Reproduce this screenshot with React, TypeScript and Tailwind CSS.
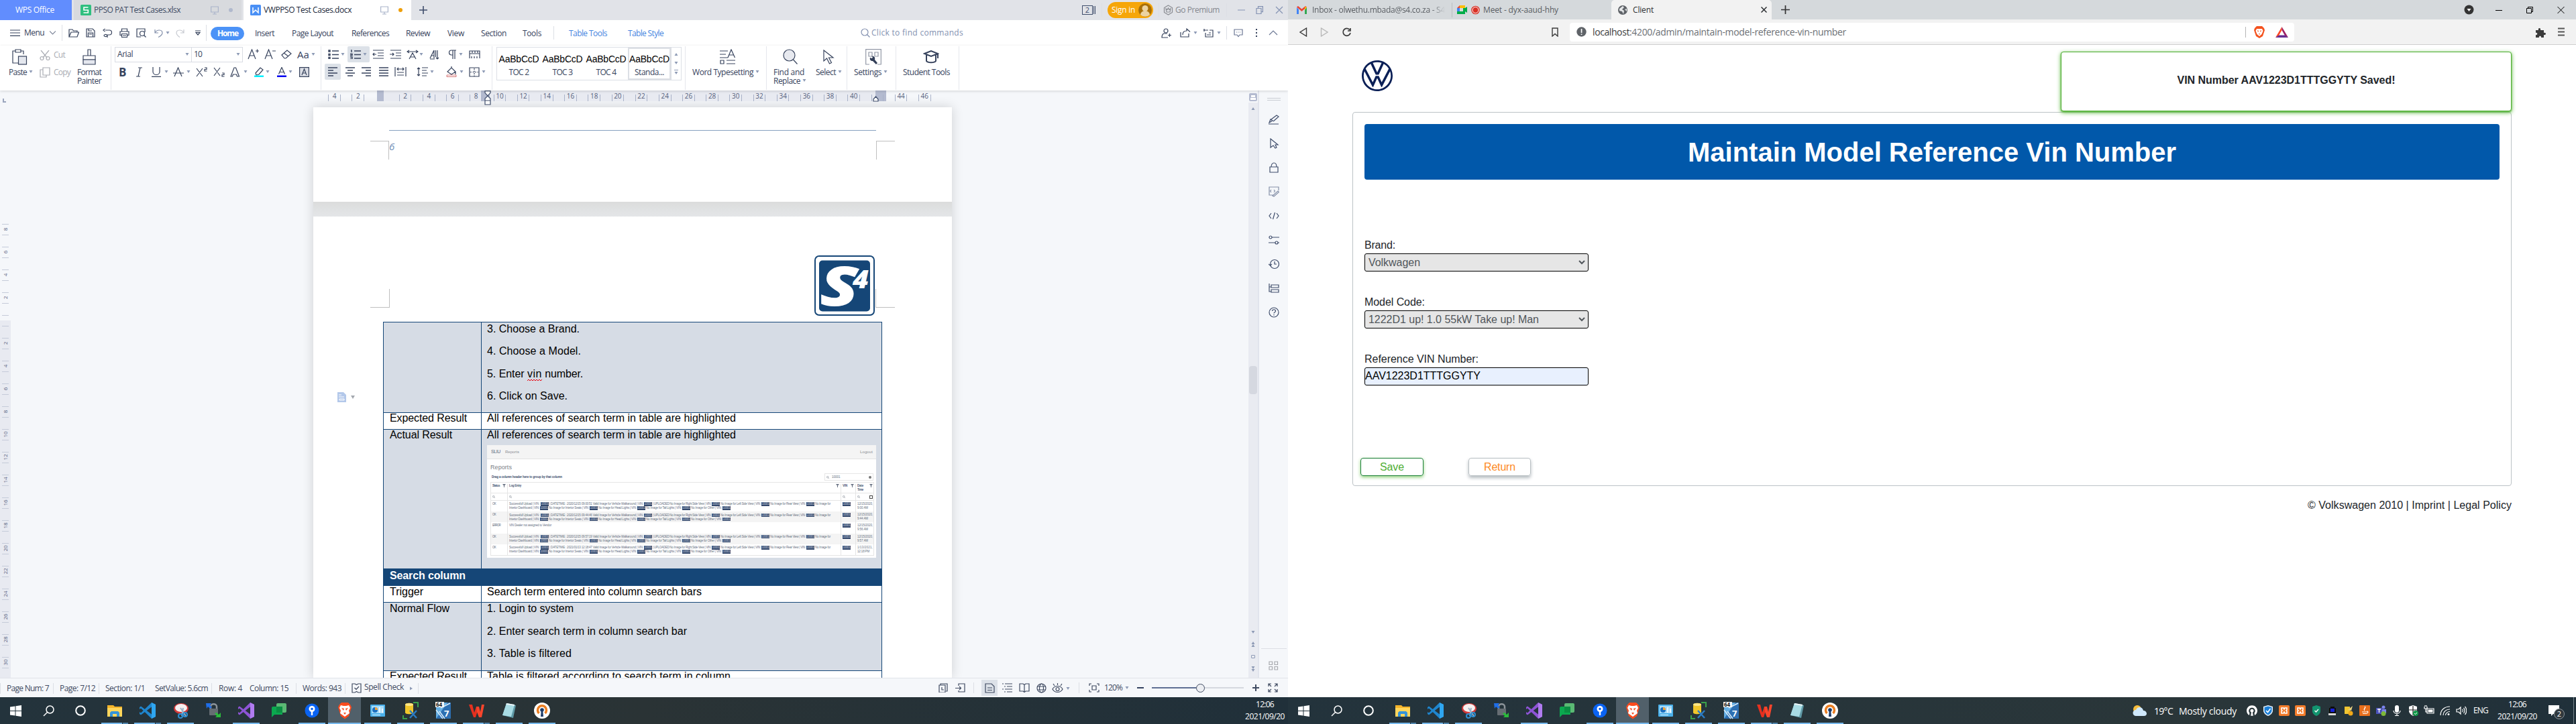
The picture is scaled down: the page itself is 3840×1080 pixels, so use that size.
import React, { useLayoutEffect, useRef, useState } from 'react';
import { SiVolkswagen, SiOpenvpn } from 'react-icons/si';

type Kids = { children?: React.ReactNode };

/* Text set to a fixed width by adjusting its tracking. */
function T({ w, c = '', children }: { w: number; c?: string; children: string }) {
  const ref = useRef<HTMLSpanElement>(null);
  const [ls, setLs] = useState(0);
  useLayoutEffect(() => {
    if (ref.current) setLs((w - ref.current.getBoundingClientRect().width) / children.length);
  }, []);
  return (
    <span className={'block shrink-0 overflow-visible whitespace-pre ' + c} style={{ width: w }}>
      <span ref={ref} className="inline-block" style={{ letterSpacing: ls }}>{children}</span>
    </span>
  );
}

function I({ w = 16, h = 16, c = '', sw = 1.2, children }: { w?: number; h?: number; c?: string; sw?: number } & Kids) {
  return (
    <svg width={w} height={h} viewBox={`0 0 ${w} ${h}`} fill="none" stroke="currentColor" strokeWidth={sw} className={'block shrink-0 ' + c}>
      {children}
    </svg>
  );
}

const Caret = ({ c = '' }: { c?: string }) => (
  <I w={6} h={4} c={'text-[#8d9ab5] ' + c} sw={0}><path d="M0.5 0h5L3 4z" fill="currentColor" /></I>
);
const Sep = ({ c = 'h-6' }: { c?: string }) => <div className={'w-px bg-[#dcdfe5] ' + c} />;

function Monitor() {
  return <I w={12} h={13} c="text-[#aab4ca]"><path d="M.6 1h10.8v8H.6zM6 9v3M3 12h6" /></I>;
}

function WpsTabs() {
  return (
    <div className="flex h-[30px] items-center bg-[#e1e3e8] text-[12px] text-[#3d4a63]">
      <div className="flex h-full w-[107px] items-center bg-[#618dfe] pl-[23px] text-white"><T w={58}>WPS Office</T></div>
      <div className="ml-[3px] flex h-full w-[250px] items-center bg-[#d8dade] pl-[10px] pr-[13px]">
        <I w={16} h={16}><rect width="16" height="16" rx="1.5" fill="#2fbf7f" stroke="none" /><path d="M11.5 4H5v4h6.300v4H4.500" stroke="#fff" strokeWidth="1.600" /></I>
        <T w={129} c="ml-1">PPSO PAT Test Cases.xlsx</T>
        <div className="ml-auto mr-[15px]"><Monitor /></div>
        <div className="size-[6px] rounded-full bg-[#b0b9cd]" />
      </div>
      <div className="ml-[3px] flex h-full w-[250px] items-center bg-white pl-[10px] pr-[13px] text-[#20283a]">
        <I w={16} h={16}><rect width="16" height="16" rx="1.5" fill="#4a90f5" stroke="none" /><path d="M4 4v8l4-4 4 4V4" stroke="#fff" strokeWidth="1.500" /></I>
        <T w={131} c="ml-1">VWPPSO Test Cases.docx</T>
        <div className="ml-auto mr-[15px]"><Monitor /></div>
        <div className="size-[6px] rounded-full bg-[#ee9f0b]" />
      </div>
      <I w={14} h={14} c="ml-[11px] text-[#3f4d6b]" sw={1.6}><path d="M7 1v12M1 7h12" /></I>
      <div className="ml-auto flex items-center pr-[7px]">
        <div className="mr-[9px] flex items-center gap-[1px] text-[#3f4d6b]">
          <div className="flex h-[14px] w-[16px] items-center justify-center border border-[#3f4d6b] text-[11px]">2</div>
          <div className="h-[12px] w-[3px] border-x border-[#3f4d6b]" />
        </div>
        <Sep c="h-5" />
        <div className="ml-2 flex h-[24px] w-[68px] items-center rounded-full bg-[#f6a609] pl-[6px] text-white">
          <T w={35}>Sign in</T>
          <I w={20} h={20} c="ml-[5px]"><circle cx="10" cy="10" r="10" fill="#a86f08" stroke="none" /><circle cx="10" cy="7.500" r="4.500" fill="#ecd3a0" stroke="none" /><path d="M3 17a7 6 0 0 1 14 0 10 10 0 0 1-14 0z" fill="#ecd3a0" stroke="none" /></I>
        </div>
        <Sep c="ml-2 h-5" />
        <I w={15} h={16} c="ml-[6px] text-[#8a8c92]"><path d="M7.500 1l6 3.500v7l-6 3.500-6-3.500v-7zM4 6l1 5h5l1-5-2 1.500L7.500 5 6 7.500z" /></I>
        <T w={66} c="ml-[3px] text-[#85888f]">Go Premium</T>
        <Sep c="ml-[10px] h-5" />
        <I w={68} h={12} c="ml-[16px] text-[#8593b3]"><path d="M0 6h11M28 3.500h7v8h-7zM30.500 3V.6H37.400v8H35M57 1l10 10M67 1L57 11" /></I>
      </div>
    </div>
  );
}

function MenuRow() {
  return (
    <div className="grid h-[38px] grid-cols-[21px_38px_18px_10px_26px_25px_25px_25px_27px_17px_15px_29px_16px_7px_66px_55px_89px_81px_62px_50px_62px_46px_23px_88px_347px_16px_432px_28px_20px_15px_20px_14px_11px_32px_20px_15px] items-center bg-white pl-[15px] text-[12px] text-[#36425c]">
      <I w={15} h={10}><path d="M0 1h15M0 5h15M0 9.300h15" /></I>
      <T w={30}>Menu</T>
      <I w={9} h={6} c="text-[#7f879a]"><path d="M0 .5l4.500 4.500L9 .5" /></I>
      <Sep />
      <I w={16} h={13}><path d="M1 12V1h5l1.500 2H13v2M1 12l3-7h11.500L13 12z" /></I>
      <I w={14} h={14}><path d="M1 1h9l3 3v9H1zM4 1v3h5M3.500 13V7h7v6M5 9h4" /></I>
      <I w={15} h={14}><path d="M4 3h6a3.500 3.500 0 0 1 0 7H7v4M3.500 1L1 3l2.500 2M7 11c-2-3-5-1-5 0s3 3 5 0" /></I>
      <I w={15} h={14}><path d="M3.500 5V1h8v4M3 10.500H1V5h13v5.500h-2M3.500 8.500h8v5h-8zM5 11h5" /></I>
      <I w={15} h={14}><path d="M13 6V1H1v12h6" /><circle cx="9" cy="8" r="3.500" /><path d="M11.500 10.500l3 3" /></I>
      <I w={14} h={13} c="text-[#8490ab]"><path d="M1 1v5h5M1.500 5.500C4 .5 12 1 12 6c0 3-3 5-6 6.500" /></I>
      <Caret />
      <I w={13} h={13} c="text-[#c6c9d0]"><path d="M12 1v5H7M11.500 5.500C9 .5 1 1 1 6c0 3 3 5 5 6.500" /></I>
      <I w={8} h={8}><path d="M0 1h8M1 3.500h6L4 7z" /></I>
      <Sep />
      <div className="mt-[1px] flex h-[20px] w-[50px] items-center rounded-full bg-[#4b92f7] pl-[10px] font-bold text-white"><T w={31}>Home</T></div>
      <T w={29} c="mt-[2px]">Insert</T>
      <T w={62} c="mt-[2px]">Page Layout</T>
      <T w={56} c="mt-[2px]">References</T>
      <T w={36} c="mt-[2px]">Review</T>
      <T w={25} c="mt-[2px]">View</T>
      <T w={38} c="mt-[2px]">Section</T>
      <T w={28} c="mt-[2px]">Tools</T>
      <Sep c="h-5" />
      <T w={57} c="mt-[2px] text-[#4585e0]">Table Tools</T>
      <T w={53} c="mt-[2px] text-[#4585e0]">Table Style</T>
      <I w={14} h={14} c="text-[#8391b0]"><circle cx="6" cy="6" r="5" /><path d="M9.500 9.500l4 4" /></I>
      <T w={137} c="text-[#8391b0]">Click to find commands</T>
      <I w={15} h={15}><circle cx="7" cy="4" r="3" /><path d="M9 8H4c-3 1-3 6-3 6h9M10 10.500h5M12.500 8v5" /></I>
      <I w={16} h={14}><path d="M1 6v7h12V8M4 10c0-4 2-6 6-6V1l5 4.500" /></I>
      <Caret />
      <I w={16} h={14}><path d="M1 1v4M0 3h7M3 7v6h11V3H9M5 10h6M8 7h3" /></I>
      <Caret />
      <Sep c="h-5" />
      <I w={14} h={13} c="text-[#6b7794]"><path d="M1 1h12v8H9l-2 2.500L5 9H1zM4 5h1M6.500 5h1M9 5h1" /></I>
      <I w={4} h={14} sw={0}><path d="M1 1h2v2H1zM1 6h2v2H1zM1 11h2v2H1z" fill="currentColor" /></I>
      <I w={14} h={8} c="text-[#6b7794]"><path d="M1 7l6-6 6 6" /></I>
    </div>
  );
}

const Lines = ({ xs }: { xs: string }) => <I w={16} h={14} sw={1.4}><path d={xs} /></I>;

function Group({ c, children }: { c: string } & Kids) {
  return <div className={'mt-px h-[65px] shrink-0 border-r border-[#e5e7ec] ' + c}>{children}</div>;
}

function BigTool({ icon, label, w, label2, w2, caret, c = '' }: { icon: React.ReactNode; label: string; w: number; label2?: string; w2?: number; caret?: boolean; c?: string }) {
  return (
    <div className={'flex flex-col items-start pt-[4px] leading-[13px] ' + c}>
      <div className="flex h-[24px] items-center self-center">{icon}</div>
      <div className="mt-1 flex items-start"><T w={w}>{label}</T>{caret && !label2 && <Caret c="ml-[3px] mt-1" />}</div>
      {label2 && <div className="flex items-start"><T w={w2 || w}>{label2}</T>{caret && <Caret c="ml-[3px] mt-1" />}</div>}
    </div>
  );
}

function StyleCard({ name, w, on }: { name: string; w: number; on?: boolean }) {
  return (
    <div className={'flex h-full shrink-0 flex-col items-center overflow-hidden ' + (on ? 'w-[64px] border-2 border-[#dcdfe5] pt-[5px]' : 'w-[65px] pt-[7px]')}>
      <T w={60} c="font-['Liberation_Sans'] text-[14px] leading-[20px] text-black">AaBbCcD</T>
      <T w={w} c="leading-[20px]">{name}</T>
    </div>
  );
}

function Ribbon() {
  return (
    <div className="relative z-10 flex h-[67px] bg-white text-[12px] text-[#36425c] shadow-[0_1px_4px_rgba(0,0,0,0.15)]">
      <Group c="flex w-[166px]">
        <BigTool c="w-[55px] pl-[13px]" w={27} caret label="Paste" icon={<I w={24} h={24} c="-ml-[10px]"><path d="M6 3H2v18h8M14 3h4v5M6 1h8v4H6z" /><rect x="10.500" y="11" width="12" height="12" fill="#e4e7ee" /></I>} />
        <div className="flex flex-col pl-[4px] text-[#a9acb3]">
          <div className="flex h-[26px] items-center gap-[5px]"><I w={16} h={15}><path d="M2 0l9 11M14 0L5 11" /><circle cx="3.500" cy="12" r="2.500" /><circle cx="12.500" cy="12" r="2.500" /></I><T w={17}>Cut</T></div>
          <div className="flex h-[26px] items-center gap-[5px]"><I w={16} h={16}><path d="M5 1h10v11H5zM5 4H1v11h9v-3" /></I><T w={25}>Copy</T></div>
        </div>
        <BigTool c="ml-[10px]" w={36} label="Format" label2="Painter" icon={<I w={20} h={24}><path d="M8 1h4v9H8zM1 10h18v6H1z" /><path d="M1 16h18v7H1z" fill="#e4e7ee" /></I>} />
      </Group>
      <Group c="flex w-[313px] flex-col gap-[2px]">
        <div className="grid h-[24px] grid-cols-[115px_83px_25px_25px_24px_21px_14px] items-center pl-[5px]">
          <div className="flex h-[23px] items-center justify-between border border-[#d9dce3] pl-[3px] pr-[3px]"><T w={23}>Arial</T><Caret /></div>
          <div className="flex h-[23px] w-[76px] items-center justify-between border border-l-0 border-[#d9dce3] pl-[3px] pr-[3px]"><T w={12}>10</T><Caret /></div>
          <I w={17} h={16}><path d="M1 15L6.500 1 12 15M3 10h7M12 3h5M14.500.5v5" /></I>
          <I w={17} h={16}><path d="M1 15L6.500 1 12 15M3 10h7M12 3h5" /></I>
          <I w={16} h={14}><path d="M1 8l8-7 6 5-8 7H5zM4 5l7 5" /></I>
          <T w={18} c="text-[15px]">Aa</T>
          <Caret />
        </div>
        <div className="grid h-[24px] grid-cols-[26px_22px_20px_13px_20px_14px_26px_25px_20px_15px_18px_17px_17px_16px_15px] items-center pl-[11px]">
          <span className="text-[17px] font-bold leading-none">B</span>
          <I w={9} h={15}><path d="M3 1h6M0 14h6M6 1L3 14" /></I>
          <I w={16} h={15}><path d="M3 0v7c0 6 10 6 10 0V0M1 14.400h14" /></I>
          <Caret />
          <I w={16} h={15}><path d="M2 14L7.500 1 13 14M0 9h16" /></I>
          <Caret />
          <I w={17} h={15}><path d="M1 2l9 12M10 2L1 14M13 1h3v2.500h-3V6h3.500" /></I>
          <I w={17} h={15}><path d="M1 1l9 12M10 1L1 13M13 9h3v2.500h-3V14h3.500" /></I>
          <I w={15} h={15}><path d="M1 14L6 1h2.500l5 13h-3l-1-3h-5l-1 3z" /></I>
          <Caret />
          <I w={16} h={15}><path d="M3 9l7-8 4 3-6 7-4 1z" /><path d="M1 12.500h14V15H1z" fill="#00f0ff" stroke="none" /></I>
          <Caret />
          <I w={14} h={15}><path d="M2.500 10.500L7 .5l4.500 10M4 7.500h6" /><path d="M0 12.500h14V15H0z" fill="#0000f0" stroke="none" /></I>
          <Caret />
          <I w={15} h={15}><path d="M.6.6h13.800v13.800H.6z" fill="#dcdfe6" /><path d="M4 12l3.500-9L11 12M5 9h5" /></I>
        </div>
      </Group>
      <Group c="flex w-[255px] flex-col gap-[2px]">
        <div className="grid h-[24px] grid-cols-[19px_10px_37px_26px_25px_19px_15px_27px_17px_15px_17px] items-center pl-[10px]">
          <Lines xs="M6 2h10M6 7.500h10M6 13h10M1 1h2v2H1zM1 6.500h2v2H1zM1 11.500h2v2H1z" />
          <Caret />
          <div className="flex h-[24px] w-[33px] items-center gap-[3px] rounded-[2px] bg-[#dce1e8] pl-1"><Lines xs="M6 2h10M6 7.500h10M6 13h10M1 1h1v3M0 6.500h3v2H0M0 11h3v3H0" /><Caret /></div>
          <I w={18} h={14}><path d="M1 1h16M8 5h9M8 9h9M1 13h16M6 7H1M3 5L1 7l2 2" /></I>
          <I w={18} h={14}><path d="M1 1h16M9 5h8M9 9h8M1 13h16M0 7h6M4 5l2 2-2 2" /></I>
          <I w={18} h={15}><path d="M1 3h16M4 1L1 3l3 2M14 1l3 2-3 2M4 14l5-9 5 9M6 11h6" /></I>
          <Caret />
          <I w={17} h={15}><path d="M1 13L7 1v12M3 9h4M1 14h7M12 1v13M9.500 1v10M10 12l2 2 2-2" /></I>
          <I w={14} h={14}><path d="M13 1H6a3.500 3.500 0 0 0 0 7h2M8 1v13M11 1v13" /></I>
          <Caret />
          <I w={17} h={13}><path d="M1 12V1h15v11M1 5h15M5 1v3M9 1v3M13 1v3M4 12v-3M8 12v-3M12 12v-3" /></I>
        </div>
        <div className="grid h-[24px] grid-cols-[30px_24px_26px_24px_33px_20px_24px_20px_14px_19px_12px] items-center pl-[5px]">
          <div className="flex h-[24px] w-[24px] items-center justify-center rounded-[2px] bg-[#dce1e8]"><Lines xs="M1 1h14M1 5h8M1 9h14M1 13h8" /></div>
          <Lines xs="M1 1h14M4 5h8M1 9h14M4 13h8" />
          <Lines xs="M1 1h14M7 5h8M1 9h14M7 13h8" />
          <Lines xs="M1 1h14M1 5h14M1 9h14M1 13h14" />
          <I w={18} h={14}><path d="M1 0v14M17 0v14M4 3h10M6 1L4 3l2 2M12 1l2 2-2 2M4 8h10M4 12h10" /></I>
          <I w={17} h={14}><path d="M3 1v12M1 3l2-2 2 2M1 11l2 2 2-2M8 1h9M8 5h7M8 9h9M8 13h7" /></I>
          <Caret />
          <I w={17} h={16}><path d="M2 8l6-6 6 6-6 4zM8 2V0M14 8v4" /><path d="M1 13h14v2.500H1z" fill="#fff" stroke="#c55" strokeWidth=".8" /></I>
          <Caret />
          <I w={16} h={15}><path d="M1 1h14v13H1z" /><path d="M8 2v12M2 7.500h12" strokeDasharray="2 1.500" /></I>
          <Caret />
        </div>
      </Group>
      <Group c="w-[288px] pl-[6px] pt-px">
        <div className="flex h-[50px] w-[276px] border border-[#dcdfe5]">
          <StyleCard name="TOC 2" w={30} /><StyleCard name="TOC 3" w={30} /><StyleCard name="TOC 4" w={30} /><StyleCard name="Standa..." w={44} on />
          <div className="flex h-full flex-1 flex-col items-center justify-between border-l border-[#dcdfe5] py-2"><Caret c="rotate-180" /><Caret /><div className="flex flex-col gap-[2px]"><div className="h-px w-[6px] bg-[#8d9ab5]" /><Caret /></div></div>
        </div>
      </Group>
      <Group c="w-[121px] pl-[10px]">
        <BigTool w={91} caret label="Word Typesetting" icon={<I w={24} h={24} c="-ml-1"><path d="M0 3h12M0 8h9M0 13h12M12 13L17 1l5.500 12M14 9h7M1 17h5v5H1zM10 17h13M10 22h13" /></I>} />
      </Group>
      <Group c="flex w-[120px] pl-[10px]">
        <BigTool w={46} w2={40} caret label="Find and" label2="Replace" icon={<I w={22} h={24}><circle cx="9.500" cy="9.500" r="8.500" fill="#e7e9ef" /><path d="M15.500 16l6 6.500" /></I>} />
        <BigTool c="ml-[14px]" w={30} caret label="Select" icon={<I w={18} h={24}><path d="M1 2v16l4.500-4 4 8 3-1.500-4-7.500H15z" /></I>} />
      </Group>
      <Group c="w-[73px] pl-[10px]">
        <BigTool w={41} caret label="Settings" icon={<I w={24} h={24} c="-ml-1 text-[#9298a6]"><path d="M6 23H.7V.7h22.600V23H18M5 5h5v6H5zM14 5h5v6h-5z" /><path d="M7 13l3 1 1-2-2-1c4-1 6 2 5 5l4 5-2 2-5-5c-3 0-5-2-4-5z" fill="#333f58" stroke="none" /></I>} />
      </Group>
      <Group c="w-[94px] pl-[10px]">
        <BigTool w={70} label="Student Tools" icon={<I w={24} h={20} sw={2}><path d="M2 5l10-4 10 4-10 4zM5 7v9c2 3 12 3 14 0V7M22 5v7" /></I>} />
      </Group>
    </div>
  );
}

const rulerMarks = Array.from({ length: 26 }, (_, i) => (i - 2) * 2);

function Ruler() {
  return (
    <div className="relative h-[16px] w-full shrink-0 overflow-hidden pl-[481px] text-[10px] text-[#55617d]">
      <div className="absolute left-[562px] top-0 flex h-full w-[759px] bg-[#e8eaf1]">
        <div className="w-[10px] bg-[#b4bbd0]" /><div className="ml-[145px] w-[13px] bg-[#b4bbd0]" /><div className="ml-auto w-[16px] bg-[#b4bbd0]" />
      </div>
      <div className="relative flex h-full">
        {rulerMarks.map((n) => (
          <div key={n} className="flex w-[35.2px] shrink-0 justify-center">
            <div className={'mt-[6px] flex h-[10px] w-[18.6px] items-end justify-center ' + (n === 0 ? '' : 'border-x border-[#a9b2c8]')}>
              <span className="leading-[15px]">{n === 0 || n === 42 ? '' : Math.abs(n)}</span>
            </div>
          </div>
        ))}
      </div>
    </div>
  );
}

/* Indent handles that hang below the ruler's edge. */
function IndentMarks() {
  return (
    <>
      <I w={10} h={22} c="absolute left-[722px] top-0 text-[#3f4d6b]"><path d="M1 .6h8v3L5 8 1 3.600zM5 8l4 4v3H1v-3zM1 15h8v6H1z" fill="#fff" /></I>
      <I w={9} h={9} c="absolute left-[1301px] top-[8px] text-[#3f4d6b]"><path d="M4.500 1L8 5v3H1V5z" fill="#fff" /></I>
    </>
  );
}

function S4Logo() {
  return (
    <svg width="90" height="90" viewBox="0 0 90 90" className="block">
      <rect x="1" y="1" width="88" height="88" rx="6" fill="#fff" stroke="#154677" strokeWidth="2" />
      <rect x="7" y="7.500" width="76" height="76" rx="5" fill="#154677" />
      <text x="8" y="75" fontFamily="Open Sans" fontStyle="italic" fontWeight="800" fontSize="82" fill="#fff" textLength="58" lengthAdjust="spacingAndGlyphs">S</text>
      <text x="57" y="48.500" fontFamily="Open Sans" fontStyle="italic" fontWeight="800" fontSize="37" fill="#fff" textLength="24" lengthAdjust="spacingAndGlyphs">4</text>
    </svg>
  );
}

const H = () => <span className="block w-[12px] shrink-0 bg-[#33476b] pl-[0.5px]"><T w={11} c="text-[#c6cfdd]">10001</T></span>;

function LogText({ date }: { date: string }) {
  return (
    <div className="flex flex-col justify-center gap-[0.5px] pl-[2px] leading-[5.500px]">
      <div className="flex"><T w={47}>{'Successfull Upload | VIN : '}</T><H /><T w={142}>{` | DATETIME : ${date} Valid Image for Vehicle Walkaround | VIN: `}</T><H /><T w={89}>{' | UPLOADED No Image for Right Side View | VIN: '}</T><H /><T w={62}>{' No Image for Left Side View | VIN: '}</T><H /><T w={55}>{' No Image for Rear View | VIN: '}</T><H /><T w={24}>{' No Image for'}</T></div>
      <div className="flex"><T w={46}>{'Interior Dashboard | VIN: '}</T><H /><T w={62}>{' No Image for Interior Seats | VIN: '}</T><H /><T w={59}>{' No Image for Head Lights | VIN: '}</T><H /><T w={55}>{' No Image for Tail Lights | VIN: '}</T><H /><T w={48}>{' No Image for Other | VIN: '}</T><H /></div>
    </div>
  );
}

const logs = [
  { s: 'OK', t: '2020/12/15 09:00:51', a: '12/15/2020,', b: '9:00 AM' },
  { s: 'OK', t: '2020/12/15 09:44:46', a: '12/15/2020,', b: '9:44 AM' },
  { s: 'ERROR', t: '', a: '12/15/2020,', b: '9:56 AM' },
  { s: 'OK', t: '2020/12/15 09:57:19', a: '12/15/2020,', b: '9:57 AM' },
  { s: 'OK', t: '2021/01/13 12:18:47', a: '1/13/2021,', b: '12:18 PM' },
];
const Funnel = () => <I w={5} h={5} sw={0} c="text-[#6b7485]"><path d="M0 0h5L3 2.500V5H2V2.500z" fill="currentColor" /></I>;
const Lens = () => <I w={4} h={4} sw={0.5}><circle cx="1.700" cy="1.700" r="1.300" /><path d="M2.600 2.600L4 4" /></I>;
const gridCols = 'grid grid-cols-[25px_497px_22px_28px] ';

function ReportShot() {
  return (
    <div className="h-[168px] w-[580px] overflow-hidden bg-white text-[4.500px] leading-[6px] text-[#66707f]">
      <div className="flex h-[21px] items-center border-b border-[#e3e3e3] bg-[#f4f4f4] pl-[6px] pr-[5px] text-[6px] text-[#8b8f96]">
        <T w={14} c="text-[7px] text-[#5d6b80]">SLIU</T><T w={21} c="ml-[7px]">Reports</T><T w={19} c="ml-auto">Logout</T>
      </div>
      <T w={32} c="ml-[5px] mt-[7px] text-[9px] leading-[11px] text-[#7a7e85]">Reports</T>
      <div className="ml-[7px] mr-[4px] mt-[3px] flex h-[11px] items-center justify-between">
        <T w={105} c="font-bold text-[#3b4c6b]">Drag a column header here to group by that column</T>
        <div className="flex h-[11px] w-[73px] items-center border border-[#e6e6e6] px-[2px]"><Lens /><span className="ml-1">10001</span><span className="ml-auto size-[4px] rounded-full bg-[#777]" /></div>
      </div>
      <div className="ml-[5px] mt-[2px] w-[572px] border border-[#e5e5e5]">
        <div className={gridCols + 'h-[16px] divide-x divide-[#e5e5e5] border-b border-[#e5e5e5] pt-[2px] font-bold text-[#4b5a75]'}>
          <div className="flex justify-between pl-[2px] pr-[2px]"><T w={11}>Status</T><Funnel /></div>
          <div className="flex justify-between pl-[2px] pr-[2px]"><T w={18}>Log Entry</T><Funnel /></div>
          <div className="flex justify-between pl-[2px] pr-[2px]"><T w={7}>VIN</T><Funnel /></div>
          <div className="flex justify-between pl-[2px] pr-[3px]"><div><T w={9}>Date</T><T w={9}>Time</T></div><Funnel /></div>
        </div>
        <div className={gridCols + 'h-[11px] items-center divide-x divide-[#e5e5e5] border-b border-[#e5e5e5] *:h-full *:pl-[2px] *:pt-[3px]'}>
          <div><Lens /></div><div><Lens /></div><div><Lens /></div><div className="flex justify-between pr-[3px]"><Lens /><div className="size-[5px] border border-[#444]" /></div>
        </div>
        {logs.map((l, i) => (
          <div key={i} className={gridCols + 'h-[16.200px] divide-x divide-[#e5e5e5] ' + (i % 2 ? 'bg-[#f4f4f4]' : '')}>
            <div className="pl-[2px] pt-[2px]"><T w={l.s === 'OK' ? 5 : 12}>{l.s}</T></div>
            {l.t ? <LogText date={l.t} /> : <div className="pl-[2px] pt-[2px]"><T w={63}>VIN Dealer not assigned to Vendor</T></div>}
            <div className="pl-[2px] pt-[2px]"><H /></div>
            <div className="pl-[2px] pt-[2px]"><T w={23}>{l.a}</T><T w={l.b.length > 7 ? 18 : 16}>{l.b}</T></div>
          </div>
        ))}
      </div>
    </div>
  );
}

function DocRow({ left, lw = 0, c, children }: { left?: string; lw?: number; c: string } & Kids) {
  return (
    <div className={'flex shrink-0 border-t border-[#154677] ' + c}>
      <div className="w-[146px] shrink-0 border-r border-[#154677] pl-[9px]">{left && <T w={lw}>{left}</T>}</div>
      <div className="pl-[8px]">{children}</div>
    </div>
  );
}

function Pages() {
  return (
    <div className="ml-[467px] mt-[9px] flex h-[851px] w-[952px] flex-col overflow-hidden bg-[#e3e5e7] shadow-[0_0_16px_rgba(0,0,0,0.16)]">
      <div className="h-[141px] shrink-0 bg-white pt-[34px]">
        <div className="ml-[113px] h-px w-[726px] bg-[#86a0c0]" />
        <div className="mt-[15px] flex pl-[85px]">
          <div className="h-[28px] w-[28px] border-r border-t border-[#bfbfbf]" />
          <span className="-mt-px font-['Open_Sans'] text-[15px] italic leading-[18px] text-[#7391b8]">6</span>
          <div className="ml-auto mr-[85px] h-[28px] w-[28px] border-l border-t border-[#bfbfbf]" />
        </div>
      </div>
      <div className="h-[22px] shrink-0 bg-linear-to-b from-[#dbdcdc] to-[#e4e6e8]" />
      <div className="h-[690px] shrink-0 bg-white pt-[58px]">
        <div className="flex h-[90px] pl-[85px] pr-[85px]">
          <div className="mt-[50px] h-[28px] w-[29px] border-b border-r border-[#bfbfbf]" />
          <div className="ml-auto mr-[1px]"><S4Logo /></div>
          <div className="mt-[50px] h-[28px] w-[29px] border-b border-l border-[#bfbfbf]" />
        </div>
        <div className="ml-[104px] mt-[9px] w-[744px] border-l border-r border-[#154677] font-['Liberation_Sans'] text-[16px] text-black">
          <DocRow c="h-[135px] bg-[#d6dce5] leading-[20px]">
            <T w={138}>3. Choose a Brand.</T>
            <T w={140} c="mt-[13px]">4. Choose a Model.</T>
            <div className="mt-[14px] flex">
              <T w={60}>{'5. Enter '}</T>
              <div className="relative"><T w={22}>vin</T><I w={22} h={4} sw={1} c="absolute left-0 top-[17px] text-red-600"><path d="M0 3l2-2 2 2 2-2 2 2 2-2 2 2 2-2 2 2 2-2 2 2 2-2" /></I></div>
              <T w={61}>{' number.'}</T>
            </div>
            <T w={120} c="mt-[13px]">6. Click on Save.</T>
          </DocRow>
          <DocRow c="h-[25px] bg-white leading-[16px]" left="Expected Result" lw={115}><T w={371}>All references of search term in table are highlighted</T></DocRow>
          <DocRow c="h-[208px] bg-[#d6dce5] leading-[16px]" left="Actual Result" lw={93}>
            <T w={371}>All references of search term in table are highlighted</T>
            <div className="mt-[7px]"><ReportShot /></div>
          </DocRow>
          <div className="h-[26px] bg-[#154677] pl-[9px] pt-px font-bold leading-[20px] text-white"><T w={113}>Search column</T></div>
          <div className="flex h-[24px] bg-white leading-[18px]"><div className="w-[146px] border-r border-[#154677] pl-[9px]"><T w={50}>Trigger</T></div><div className="pl-[8px]"><T w={320}>Search term entered into column search bars</T></div></div>
          <DocRow c="h-[102px] bg-[#d6dce5] leading-[18px]" left="Normal Flow" lw={89}>
            <T w={129}>1. Login to system</T>
            <T w={298} c="mt-[16px]">2. Enter search term in column search bar</T>
            <T w={126} c="mt-[15px]">3. Table is filtered</T>
          </DocRow>
          <DocRow c="h-[30px] bg-white leading-[16px]" left="Expected Result" lw={115}><T w={363}>Table is filtered according to search term in column</T></DocRow>
        </div>
      </div>
    </div>
  );
}

function Side() {
  return (
    <div className="flex w-[43px] flex-col items-center pt-[11px] text-[#3f4d6b]">
      <div className="h-[4px] w-[20px] border-y border-[#c9ccd4]" />
      <div className="mt-[20px] flex flex-col gap-[20px]">
        <I><path d="M1 13l2-5 3 2zM4 8l8-6 3 2-8 7M0 15h15" /></I>
        <I><path d="M3 1v13l4-3 3 4 2-1-2-4h4z" /></I>
        <I><path d="M2 7h12v8H2zM4 7c0-8 8-8 8 0" /></I>
        <I c="text-[#8590a8]"><path d="M7 13H1V1h14v5M4 5L2.500 7 4 9M8 5l1.500 2L8 9M6 14l8-7 1.500 1.500L8 15z" /></I>
        <I><path d="M4 4L1 8l3 4M12 4l3 4-3 4M9.500 3l-3 10" /></I>
        <I><circle cx="3" cy="4" r="2" /><circle cx="12" cy="12" r="2" /><path d="M5 4h11M0 12h10M14 12h2" /></I>
        <I><circle cx="9" cy="8" r="6.500" /><path d="M9 4v4h3M0 8l2.500 2L5 8" /></I>
        <I><path d="M1 1v12h3M1 6h3M4 3h11v4H4zM4 10h11v4H4z" /></I>
        <I><circle cx="8" cy="8" r="7" /><path d="M5.500 6c0-3 5-3 5 0 0 2-2.500 1.500-2.500 3.500M8 11v1.500" /></I>
      </div>
      <div className="mt-auto h-px w-[38px] bg-[#dcdfe5]" />
      <I w={15} h={14} c="mb-[11px] mt-[18px] text-[#a7a9ae]"><path d="M1 1h4.500v4.500H1zM9 1h4.500v4.500H9zM1 8.500h4.500V13H1zM9 8.500h4.500V13H9z" /></I>
    </div>
  );
}

const vMarks = [4, 3, 2, 1, 0, 1, 2, 3, 4, 5, 6, 7, 8, 9, 10, 11, 12, 13, 14, 15];

function VRuler() {
  return (
    <div className="absolute left-0 top-[190px] flex h-[686px] w-[16px] flex-col overflow-hidden text-[8px] text-[#55617d]">
      <div className="absolute bottom-0 left-0 top-[153px] w-[16px] bg-[#e8eaf1]" />
      <div className="absolute inset-0 flex flex-col">
        {vMarks.map((n, i) => (
          <div key={i} className="flex h-[34px] shrink-0 items-center justify-center"><div className="flex h-[17px] w-[10px] items-center justify-center border-y border-[#c5cbd9]"><span className="-rotate-90 leading-none">{n ? n * 2 : ''}</span></div></div>
        ))}
      </div>
    </div>
  );
}

function DocArea() {
  return (
    <div className="flex h-[876px] bg-[#f5f7fa]">
      <div className="relative h-full w-[1861px] shrink-0 overflow-hidden">
        <Ruler /><Pages /><VRuler /><IndentMarks />
        <I w={5} h={6} c="absolute left-[4px] top-[12px] text-[#9aa5bd]" sw={2}><path d="M1 0v5h4" /></I>
        <div className="absolute left-[503px] top-[450px] flex items-center gap-[7px]">
          <I w={13} h={15} sw={1}><path d="M0 0h9l4 4v11H0z" fill="#b3c8ea" stroke="none" /><path d="M2 4h4M2 7h8M3 10h7v2H3z" stroke="#fff" /></I>
          <I w={6} h={5} sw={0}><path d="M0 0h6L3 5z" fill="#a3a7ae" /></I>
        </div>
      </div>
      <div className="flex w-[14px] flex-col items-center pt-[4px]">
        <I w={12} h={12} sw={0}><rect width="12" height="12" rx="2" fill="#b4bbd0" /><path d="M2 7h8v3H2zM3 3h6v3H3z" fill="#fff" /></I>
        <div className="mt-[2px] flex w-[14px] flex-1 flex-col items-center bg-[#e9ebf1] pt-[7px]">
          <Caret c="rotate-180" />
          <div className="mt-[382px] h-[42px] w-[12px] rounded-[4px] bg-[#d5d8e0]" />
          <div className="mt-auto flex flex-col items-center gap-[12px] pb-[9px]">
            <Caret />
            <div><Caret c="rotate-180" /><Caret c="rotate-180" /></div>
            <div className="h-[5px] w-[6px] rounded-[1px] border border-[#8d9ab5]" />
            <div><Caret /><Caret /></div>
          </div>
        </div>
      </div>
      <div className="w-[2px] bg-[#e1e4ec]" />
      <Side />
    </div>
  );
}

function StatusBar() {
  return (
    <div className="flex h-[29px] items-center border-t border-[#e0e3e9] bg-[#f5f7fa] text-[12px] text-[#3f4a61]">
      <div className="grid grid-cols-[10px_69px_10px_58px_10px_74px_84px_11px_46px_69px_10px_63px_10px_19px_67px_13px_1px] items-center pt-px">
        <Sep c="h-4" /><T w={63}>Page Num: 7</T><Sep c="h-4" /><T w={53}>Page: 7/12</T><Sep c="h-4" /><T w={59}>Section: 1/1</T><T w={79}>SetValue: 5.6cm</T><Sep c="h-4" /><T w={35}>Row: 4</T><T w={58}>Column: 15</T><Sep c="h-4" /><T w={58}>Words: 943</T><Sep c="h-4" />
        <I w={15} h={15}><path d="M5 1H1v13h4l2.500-1.500L10 14h4V1h-4L7.500 2.500zM4.500 7l2.500 2.500L11 5" /></I>
        <T w={59} c="-mt-[3px]">Spell Check</T>
        <Caret c="-rotate-90" /><Sep c="h-4" />
      </div>
      <div className="ml-auto grid grid-cols-[25px_27px_12px_31px_25px_26px_23px_21px_19px_15px_23px_31px_18px_22px_150px_23px_30px] items-center">
        <I w={14} h={14}><path d="M1 3h9v11H1zM3 3V1h10v11h-2M5 6v4h3" /></I>
        <I w={16} h={14}><path d="M5 4V1h9v12H5v-2M0 7.500h8M6 5l2.500 2.500L6 10" /></I>
        <Sep c="h-4" />
        <div className="flex h-[24px] w-[24px] items-center justify-center bg-[#dce1e8]"><I w={15} h={15}><path d="M1 1h9l4 4v9H1zM4 7h7M4 10.500h7" /></I></div>
        <I w={15} h={14}><path d="M0 1h2M4 1h11M3 5h2M7 5h8M0 9h2M4 9h11M3 13h2M7 13h8" /></I>
        <I w={16} h={14}><path d="M1 1h5l2 1.500L10 1h5v11h-5l-2 1.500L6 12H1zM8 2v11" /></I>
        <I w={15} h={15}><circle cx="7.500" cy="7.500" r="6.500" /><ellipse cx="7.500" cy="7.500" rx="3" ry="6.500" /><path d="M1 5h13M1 10h13" /></I>
        <I w={17} h={15}><path d="M1 9c3-6 12-6 15 0-3 6-12 6-15 0zM8.500 3V0M4 4L2 1M13 4l2-3" /><circle cx="8.500" cy="9" r="2.500" /></I>
        <Caret c="mt-px" />
        <Sep c="h-4" />
        <I w={16} h={14}><path d="M4 1H1v3M12 1h3v3M4 13H1v-3M12 13h3v-3M5 4h6v6H5z" /></I>
        <T w={27}>120%</T>
        <Caret />
        <div className="h-[2px] w-[10px] bg-[#33415f]" />
        <div className="flex w-[137px] items-center"><div className="h-[2px] w-[66px] bg-[#5e6f93]" /><div className="size-[13px] rounded-full border border-[#3f4a61] bg-[#eceef2]" /><div className="h-[2px] flex-1 bg-[#d5d8df]" /></div>
        <I w={10} h={10} sw={2}><path d="M5 0v10M0 5h10" /></I>
        <I w={15} h={14}><path d="M5 1H1v4M1 1l4 4M10 1h4v4M14 1l-4 4M5 13H1V9M1 13l4-4M10 13h4V9M14 13l-4-4" /></I>
      </div>
    </div>
  );
}

const Folder = () => <I w={24} h={24} sw={0}><path d="M1 4h9l2 2h11v15H1z" fill="#f3b32a" /><path d="M1 8h22v13H1z" fill="#ffd65c" /><path d="M5 21v-6l2-2h10l2 2v6h-4v-4H9v4z" fill="#3594d8" /></I>;
const Code = ({ a, b }: { a: string; b: string }) => <I w={26} h={26} sw={0}><path d="M19 1l6 3v18l-6 3L3 9.500 1 11V8l2-1.500 16 12z" fill={a} /><path d="M19 1L3 16.500 1 15v3l2 1.500L19 7.500z" fill={a} /><path d="M19 1l6 3v18l-6 3z" fill={b} /></I>;
const Snip = () => <I w={24} h={24} sw={0}><ellipse cx="13" cy="9" rx="11" ry="8" fill="#d33a3a" /><ellipse cx="13" cy="8" rx="9" ry="6" fill="#f6f0f0" /><path d="M12 8l8 12M16 8l-2 12" stroke="#9fb3c6" strokeWidth="2" /><circle cx="12" cy="20" r="3" fill="none" stroke="#2d8fd4" strokeWidth="2" /><circle cx="19" cy="18" r="3" fill="none" stroke="#2d8fd4" strokeWidth="2" /></I>;
const Lock = () => <I w={24} h={24} sw={0}><path d="M8 10V6c0-5 9-5 9 0v4" fill="none" stroke="#8c9399" strokeWidth="2.500" /><rect x="6" y="9" width="13" height="10" rx="1" fill="#666d73" /><path d="M1 1h8L7 4l3 3-3 2-3-3-2 3z" fill="#1f6ee8" /><path d="M23 22h-8l2-2-3-4 3-1 3 3 3-3z" fill="#2bbb3b" /></I>;
const Chat = () => <I w={24} h={24} sw={0}><rect x="8" y="1" width="15" height="14" rx="2" fill="#5bb974" /><path d="M3 6h12a2 2 0 0 1 2 2v10H5l-4 4V8a2 2 0 0 1 2-2z" fill="#0ba94f" /><path d="M8 6h9v9H8z" fill="#0a8f43" /></I>;
const Tree = () => <I w={24} h={24} sw={0}><circle cx="12" cy="12" r="10.500" fill="#0a63f2" /><circle cx="12" cy="9.500" r="4.500" fill="#fff" /><path d="M10.800 12h2.400v7h-2.400z" fill="#fff" /><circle cx="12" cy="9.500" r="1.800" fill="#0a63f2" /></I>;
const Brave = () => <I w={22} h={26} sw={0}><path d="M6 1h10l3 3 2 4-4 13-6 4.500L5 21 1 8l2-4z" fill="#fb4b1e" /><path d="M5 5l4 1h4l4-1 2 4-2 4 1 4-7 5-7-5 1-4-2-4z" fill="#fff" /><path d="M6 9l4 1-1 3zM16 9l-4 1 1 3zM9 16h4l-2 3z" fill="#fb4b1e" /></I>;
const Panel = () => <I w={22} h={18} sw={0}><rect width="22" height="18" rx="1" fill="#4ab0ea" /><path d="M2 2h18v11H2z" fill="#a9dcf8" /><circle cx="7" cy="8" r="4" fill="#1b6fc0" /><path d="M7 8V4a4 4 0 0 1 4 4z" fill="#f7a63a" /><path d="M13 4h2v8h-2zM17 6h2v6h-2zM3 15h12v1H3z" fill="#e9f6ff" /></I>;
const Db = () => <I w={24} h={26} sw={0}><path d="M1 20v5h6M23 8V1h-7" fill="none" stroke="#3aa04a" strokeWidth="2" /><path d="M4 4c0-3 12-3 12 0v12c0 3-12 3-12 0z" fill="#f0c62b" /><ellipse cx="10" cy="4" rx="6" ry="2" fill="#fbe588" /><path d="M11 13l10 11M21 13L11 24" stroke="#2b7cc4" strokeWidth="2.500" /></I>;
const Seven = () => <I w={24} h={26} sw={0}><path d="M1 1h22v24H1z" fill="#66b0e4" /><path d="M1 25L18 1h5v24z" fill="#2d6fb2" /><path d="M1 12l10 13M8 9l14-7M6 14l8 11" stroke="#d9edfb" strokeWidth="1.500" /><path d="M0 0h13v8H0z" fill="#f5f5f5" /><text x="1" y="7" fontSize="8" fontWeight="700" fontFamily="Open Sans" fill="#111">64</text><text x="13" y="22" fontSize="13" fontWeight="700" fontFamily="Open Sans" fill="#fff">7</text></I>;
const Wps = () => <I w={24} h={22} sw={0}><path d="M1 2h5l3 12 3-9h4l-5 16H8z" fill="#e5301f" /><path d="M12 5h4l2 8 2-11h4l-4 19h-4l-3-8z" fill="#f8452c" /></I>;
const Note = () => <I w={24} h={24} sw={0}><path d="M8 1l14 3-4 19L2 19z" fill="#5f99a6" /><path d="M8 1l12 2-5 18L2 19z" fill="#a8dbe4" /><path d="M8 1l12 2v2L7.500 3z" fill="#e9f3f5" /></I>;
const Vpn = () => <I w={24} h={26} sw={0}><circle cx="12" cy="13" r="12" fill="#fff" /><path d="M7.500 17a6.500 6.500 0 1 1 9 0" fill="none" stroke="#ea7e22" strokeWidth="3.500" /><circle cx="12" cy="12" r="2.800" fill="#1c3a68" /><path d="M10.800 13h2.400l.8 9h-4z" fill="#1c3a68" /></I>;

const apps: { n: React.ReactNode; u?: 'one' | 'two' | 'on' }[] = [
  { n: <Folder />, u: 'two' }, { n: <Code a="#1f86cf" b="#2fa6f0" />, u: 'two' }, { n: <Snip />, u: 'one' }, { n: <Lock /> },
  { n: <Code a="#8e54d6" b="#b07cf0" />, u: 'one' }, { n: <Chat /> }, { n: <Tree />, u: 'one' }, { n: <Brave />, u: 'on' },
  { n: <Panel />, u: 'one' }, { n: <Db />, u: 'one' }, { n: <Seven />, u: 'one' }, { n: <Wps />, u: 'two' }, { n: <Note />, u: 'one' }, { n: <Vpn />, u: 'one' },
];

function Launcher() {
  return (
    <div className="flex h-full items-center text-white">
      <div className="w-[49px] pl-[15px]"><I w={17} h={17} sw={0}><path d="M0 2.500L7.500 1.500v6.500H0zM8.500 1.300L17 0v8H8.500zM0 9h7.500v6.500L0 14.500zM8.500 9H17v8l-8.500-1.300z" fill="#fff" /></I></div>
      <div className="w-[49px] pl-[15px]"><I w={17} h={17} sw={1.500}><circle cx="10.500" cy="6.500" r="5.500" /><path d="M6.500 10.500L1 16" /></I></div>
      <div className="w-[48px] pl-[14px]"><I w={16} h={16} sw={2}><circle cx="8" cy="8" r="6.800" /></I></div>
      {apps.map((a, i) => (
        <div key={i} className={'flex h-full w-[49px] flex-col items-center ' + (a.u === 'on' ? 'bg-[#51606a]' : '')}>
          <div className="flex flex-1 items-center pt-[2px]">{a.n}</div>
          <div className={'flex h-[2px] ' + (a.u === 'on' ? 'w-full' : 'w-[40px]')}>
            {a.u && <div className="flex-1 bg-[#76b9ed]" />}
            {a.u === 'two' && <div className="ml-px w-[8px] bg-[#5186ad]" />}
          </div>
        </div>
      ))}
    </div>
  );
}

const Clock = () => (
  <div className="flex flex-col items-center text-[12px] leading-[18px] text-white"><T w={27}>12:06</T><T w={59}>2021/09/20</T></div>
);

function Tray() {
  return (
    <div className="flex h-full items-center text-[12px] text-white">
      <I w={22} h={18} sw={0}><circle cx="7" cy="7" r="6" fill="#f6bd3c" /><path d="M5 17a4.500 4.500 0 0 1 0-9c2-6 10-5 11 1 6 0 7 8 1 8z" fill="#cfe8fb" /></I>
      <T w={28} c="ml-[10px] text-[14px]">19°C</T>
      <T w={86} c="ml-[9px] text-[14px]">Mostly cloudy</T>
      <div className="ml-[15px] flex items-center gap-2">
        <SiOpenvpn size={16} />
        <I sw={0}><path d="M8 0l7 2v6c0 4-4 7-7 8-3-1-7-4-7-8V2z" fill="#e8f2fb" /><path d="M8 1.500l5.500 1.500v5c0 3-3 5.500-5.500 6.500C5.500 13.500 2.500 11 2.500 8V3z" fill="#1c7fd6" /><path d="M5 8l2.500 2.500L11.500 5" stroke="#fff" strokeWidth="1.600" fill="none" /></I>
        {[0, 1].map((k) => <I key={k} sw={0}><rect width="16" height="16" rx="2" fill="#f27b2a" /><path d="M4 4h3l1 2 1-2h3v3l-1 1 1 1v3H9l-1-2-1 2H4V9l1-1-1-1z" fill="none" stroke="#fff" strokeWidth="1.600" /></I>)}
        <I sw={0}><path d="M8 0l6 2v7c0 3-3 6-6 7-3-1-6-4-6-7V2z" fill="#12946f" /><path d="M5.500 8l2 2 3.500-4" stroke="#fff" strokeWidth="1.200" fill="none" /></I>
        <I sw={0}><path d="M5 2h6v3H5zM3 4h10v8H3z" fill="#0d0d0d" /><path d="M5 5h6v5H5z" fill="#1822d8" /><path d="M2 12h11v3H2z" fill="#d8d8d8" /></I>
        <I sw={0}><path d="M2 2h8v11H2z" fill="#f2c632" /><path d="M7 7l7-6-2 7z" fill="#e8d080" /><circle cx="11" cy="12" r="3.500" fill="#f0a818" /></I>
        <I sw={0}><rect width="16" height="16" rx="1" fill="#e76f1c" /><path d="M8 2c3 2-3 3 0 6M4 10h7M5 12.500h6M11 9c3 0 2 3 0 3" stroke="#fff" strokeWidth="1.200" fill="none" /></I>
        <I sw={0}><path d="M1 4h9v9H1z" fill="#4b53bc" /><circle cx="12" cy="3" r="2.500" fill="#7b83eb" /><path d="M10 6h6v6h-6z" fill="#7b83eb" /><path d="M3 6h5M5.500 6v5" stroke="#fff" strokeWidth="1.300" /><circle cx="12" cy="12.500" r="3.500" fill="#7db83a" /></I>
        <I sw={0}><rect x="5" y="0" width="6" height="11" rx="3" fill="#fff" /><path d="M3 8c0 6 10 6 10 0M8 13v3M5 15.500h6" stroke="#fff" fill="none" strokeWidth="1.200" /></I>
        <I sw={0}><path d="M8 0l6 2v6c0 4-3 6-6 8-3-2-6-4-6-8V2z" fill="#fff" /><path d="M8 1v14M2 7h12" stroke="#222" strokeWidth="1.200" /><circle cx="12" cy="12" r="4" fill="#149a4b" /><path d="M10 12l1.500 1.500L14 11" stroke="#fff" fill="none" strokeWidth="1" /></I>
        <I><path d="M5 5h10v7H5zM1 2v3h4V2M3 5v5h2M2 0v2M4 0v2" /><path d="M6.500 6.500h7v4h-7z" fill="#fff" stroke="none" /></I>
        <I><path d="M1 15C1 7 7 2 15 2M5 15c0-5 4-9 10-9M8.500 15c0-3 3-5.500 6.500-5.500" /><circle cx="13" cy="13.500" r="1.500" fill="#fff" stroke="none" /></I>
        <I><path d="M1 6h3l3-3v10l-3-3H1zM9.500 6c1 1 1 3 0 4M11.500 4c2 2 2 6 0 8M13.500 2c3 3 3 9 0 12" /></I>
      </div>
      <T w={22} c="ml-[10px]">ENG</T>
      <div className="ml-[14px]"><Clock /></div>
      <div className="relative ml-[17px]"><I w={18} h={17} sw={0}><path d="M0 0h16v13H7l-3 3v-3H0z" fill="#fff" /><path d="M3 3.500h10M3 6.500h10M3 9.500h7" stroke="#26343c" /></I>
        <div className="absolute left-[8px] top-[5px] flex size-[16px] items-center justify-center rounded-full border border-[#8b949a] bg-[#30383d] text-[11px] leading-none">2</div>
      </div>
      <div className="ml-[19px] h-full w-px bg-[#76838b]" />
      <div className="w-[3px]" />
    </div>
  );
}

function Office() {
  return (
    <div className="flex h-full w-[1920px] flex-col overflow-hidden font-['Open_Sans',sans-serif]">
      <WpsTabs /><MenuRow /><Ribbon /><DocArea /><StatusBar />
      <div className="flex flex-1 items-center justify-between bg-linear-to-r from-[#23333c] via-[#2a3335] to-[#20303a] pr-[5px]"><Launcher /><Clock /></div>
    </div>
  );
}

function BrowserChrome() {
  return (
    <>
      <div className="flex h-[29px] items-center bg-[#d5d9dc] text-[12px] text-[#5a5e63]">
        <I w={15} h={12} c="ml-[13px]" sw={0}><path d="M0 2v10h3V5z" fill="#4285f4" /><path d="M15 2v10h-3V5z" fill="#34a853" /><path d="M0 1.500L7.500 8 15 1.500 13 0 7.500 4.500 2 0z" fill="#ea4335" /><path d="M12 1l3 1-3 4z" fill="#fbbc04" /></I>
        <T w={198} c="ml-[8px] mask-r-from-90%">Inbox - olwethu.mbada@s4.co.za - S4</T>
        <div className="ml-[10px] h-[22px] w-px bg-[#b9bdc1]" />
        <I w={15} h={13} c="ml-[7px]" sw={0}><path d="M0 4l4-4v4z" fill="#ea4335" /><path d="M0 4h4v5H0z" fill="#4285f4" /><path d="M4 0h8v4H4z" fill="#fbbc04" /><path d="M0 9h11v4H0zM9 4h3v9H9zM12 4l3-2v9l-3-2z" fill="#00ac47" /></I>
        <I w={13} h={14} c="ml-[6px]" sw={0}><circle cx="6.500" cy="7" r="6.300" fill="#d93025" /><circle cx="6.500" cy="7" r="4.500" fill="none" stroke="#fff" strokeWidth="1" /></I>
        <T w={112} c="ml-[5px]">Meet - dyx-aaud-hhy</T>
        <div className="ml-[79px] flex h-full w-[239px] items-center rounded-t-[5px] bg-[#f2f2f2] pl-[10px] pr-[7px] text-[#2c2f33]">
          <I w={14} h={14} sw={0}><circle cx="7" cy="7" r="7" fill="#5f6368" /><path d="M2 5l5-4 2 2-3 3 3 2-1 5-2-4-4-1zM10 6l3-1v4z" fill="#e4e6e8" /></I>
          <T w={31} c="ml-[8px]">Client</T>
          <I w={9} h={9} c="ml-auto" sw={1.500}><path d="M.5.5l8 8M8.500.5l-8 8" /></I>
        </div>
        <I w={13} h={13} c="ml-[14px] text-[#333]" sw={1.700}><path d="M6.500 0v13M0 6.500h13" /></I>
        <I w={15} h={15} c="ml-auto" sw={0}><circle cx="7.500" cy="7.500" r="7" fill="#333" /><path d="M4.500 6h6l-3 4z" fill="#fff" /></I>
        <I w={103} h={12} c="ml-[32px] mr-[17px] text-black" sw={1}><path d="M0 6.500h10M46.500 3.500h7v7h-7zM48.500 3.500v-2h7v7h-2M92.500 1l10 10M102.500 1l-10 10" /></I>
      </div>
      <div className="flex h-[38px] items-center border-b border-[#cfcfcf] bg-[#f2f2f2] text-[#3b3b3b]">
        <I w={12} h={14} c="ml-[17px]" sw={1.400}><path d="M10.500 1v12L1 7z" /></I>
        <I w={12} h={14} c="ml-[19px] text-[#b9b9b9]" sw={1.400}><path d="M1.500 1v12L11 7z" /></I>
        <I w={15} h={14} c="ml-[20px]" sw={1.700}><path d="M12 3.500A5.500 5.500 0 1 0 13 8M13 1v4H9" /></I>
        <I w={10} h={14} c="ml-[298px]" sw={1.400}><path d="M1 1h8v12L5 9.500 1 13z" /></I>
        <div className="ml-[17px] flex h-[28px] w-[1080px] items-center rounded-[4px] bg-white pl-[10px] pr-[9px] text-[14px]">
          <I w={15} h={15} sw={0}><circle cx="7.500" cy="7.500" r="7.200" fill="#5f6368" /><path d="M6.700 3h1.700v6H6.700zM6.700 10.500h1.700V12H6.700z" fill="#fff" /></I>
          <T w={55} c="ml-[9px]">localhost</T><T w={323} c="text-[#6c7075]">:4200/admin/maintain-model-reference-vin-number</T>
          <div className="ml-auto mr-[12px] h-[16px] w-px bg-[#b5b5b5]" />
          <I w={16} h={18} sw={0}><path d="M4 0h8l3 3 1 3-3 9-5 3-5-3L0 6l1-3z" fill="#f4531f" /><path d="M4 4h8l1.500 3-2 5L8 15l-3.500-3-2-5z" fill="#fff" /><path d="M5 6l2 1-1 2zM11 6L9 7l1 2zM7 11h2l-1 2z" fill="#f4531f" /></I>
          <I w={19} h={16} c="ml-[16px]" sw={0}><path d="M9.500 0L0 16l5-3 4.500-8z" fill="#ff4724" /><path d="M9.500 0L19 16l-5-3-4.500-8z" fill="#9e1f63" /><path d="M0 16h19l-5-3.500H5z" fill="#662d91" /></I>
        </div>
        <I w={16} h={16} c="ml-auto" sw={0}><path d="M1 5h4C4 1 9 1 8 5h5v4c4-1 4 4 0 3v4H9c1-3-4-3-3 0H1v-4c3 1 3-4 0-3z" fill="#3b3b3b" /></I>
        <I w={10} h={13} c="ml-[18px] mr-[17px] text-[#555]" sw={2}><path d="M0 1.500h10M0 6.500h10M0 11.500h10" /></I>
      </div>
    </>
  );
}

function SelectBox({ w, children }: { w: number; children: string }) {
  return (
    <div className="flex h-[27px] w-[334px] items-center justify-between rounded-[3px] border border-black bg-[#e6e6e6] pl-[5px] pr-[4px] text-[#51565b]">
      <T w={w}>{children}</T><I w={10} h={7} sw={2}><path d="M1 1l4 4 4-4" /></I>
    </div>
  );
}

function AdminPage() {
  return (
    <div className="relative flex-1 bg-white pl-[96px] font-['Liberation_Sans'] text-[16px] text-[#212529]">
      <div className="flex h-[100px] pl-[14px] pt-[23px] text-[#0a1f56]"><SiVolkswagen size={46} /></div>
      <div className="h-[558px] w-[1728px] rounded-[4px] border border-[#bcc2c6] px-[17px] pt-[17px]">
        <div className="flex h-[83px] justify-center rounded-[4px] bg-[#0158aa] text-[40px] font-bold leading-[84px] text-white"><T w={728}>Maintain Model Reference Vin Number</T></div>
        <div className="flex flex-col gap-[38px] pt-[88px] leading-[20px]">
          <div className="flex flex-col gap-[2px]"><T w={46}>Brand:</T><SelectBox w={77}>Volkwagen</SelectBox></div>
          <div className="-mt-[2px] flex flex-col gap-[2px]"><T w={90}>Model Code:</T><SelectBox w={254}>1222D1 up! 1.0 55kW Take up! Man</SelectBox></div>
          <div className="-mt-[2px] flex flex-col gap-[2px]"><T w={170}>Reference VIN Number:</T><div className="h-[27px] w-[334px] rounded-[3px] border border-black bg-[#e8f0fe] leading-[24px] text-black"><T w={172}>AAV1223D1TTTGGYTY</T></div></div>
        </div>
        <div className="-ml-[6px] mt-[108px] flex gap-[67px] leading-[25px]">
          <div className="flex h-[27px] w-[94px] justify-center rounded-[4px] border border-[#1a7f37] text-[#4fae33] shadow-[0_2px_5px_#8fd07a]"><T w={36}>Save</T></div>
          <div className="flex h-[27px] w-[93px] justify-center rounded-[4px] border border-[#b9bfc3] text-[#fd8a25] shadow-[0_3px_5px_#b5bcc0]"><T w={47}>Return</T></div>
        </div>
      </div>
      <div className="flex w-[1728px] justify-end pt-[18px] leading-[22px]"><T w={304}>© Volkswagen 2010 | Imprint | Legal Policy</T></div>
      <div className="absolute left-[1152px] top-[10px] flex h-[89px] w-[672px] items-center justify-center rounded-[4px] border border-[#4fae33] bg-white font-bold text-[#212529] shadow-[0_2px_6px_#5cb83f,0_1px_2px_#5cb83f]">
        <T w={325} c="-mt-[3px] text-[16px]">VIN Number AAV1223D1TTTGGYTY Saved!</T>
      </div>
    </div>
  );
}

export default function App() {
  return (
    <div className="flex h-[1080px] w-[3840px] overflow-hidden bg-white">
      <Office />
      <div className="flex h-full w-[1920px] flex-col font-['Open_Sans',sans-serif]">
        <BrowserChrome />
        <AdminPage />
        <div className="flex h-[40px] items-center justify-between bg-linear-to-r from-[#23333c] via-[#2a3639] via-70% to-[#20303a]"><Launcher /><Tray /></div>
      </div>
    </div>
  );
}
